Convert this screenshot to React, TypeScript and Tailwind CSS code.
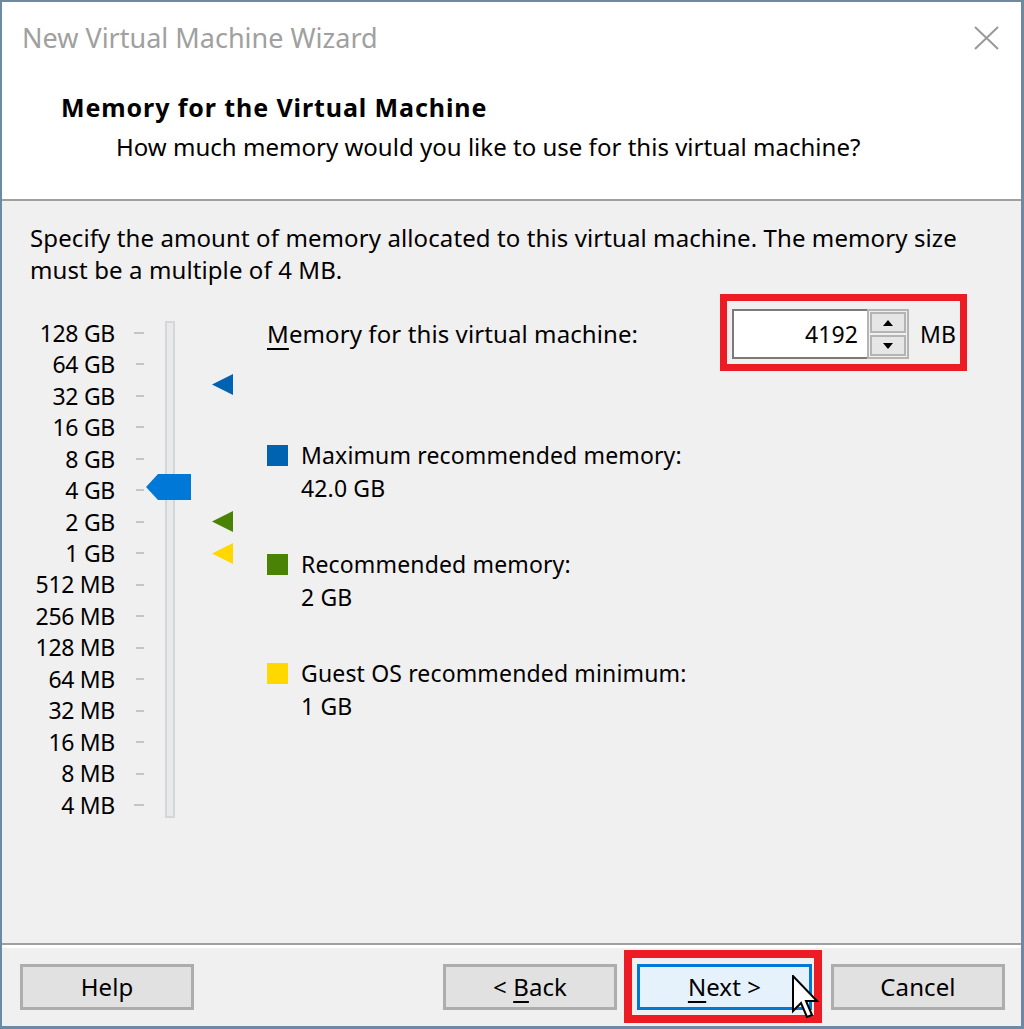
import React from "react";

const labels = [
  "128 GB", "64 GB", "32 GB", "16 GB", "8 GB", "4 GB", "2 GB", "1 GB",
  "512 MB", "256 MB", "128 MB", "64 MB", "32 MB", "16 MB", "8 MB", "4 MB",
];

function Marker({ color, top }: { color: string; top: number }) {
  return (
    <svg
      className="absolute left-[210px]"
      style={{ top }}
      width="21"
      height="21"
      viewBox="0 0 21 21"
    >
      <polygon points="0,10.5 21,0 21,21" fill={color} />
    </svg>
  );
}

function Legend({ color, title, value }: { color: string; title: string; value: string }) {
  return (
    <div className="flex items-start">
      <div className="mt-[6.5px] h-[21px] w-[21px] shrink-0" style={{ backgroundColor: color }} />
      <div className="ml-[13px] text-[23px] leading-[33px] tracking-[0.15px]">
        <div>{title}</div>
        <div>{value}</div>
      </div>
    </div>
  );
}

function Button({ children, primary }: { children: React.ReactNode; primary?: boolean }) {
  return (
    <div
      className={
        primary
          ? "flex h-[46px] w-[175px] items-center justify-center border-[3px] border-[#0078d7] bg-[#e5f1fb]"
          : "flex h-[46px] w-[174px] items-center justify-center border-[3px] border-[#adadad] bg-[#e1e1e1]"
      }
    >
      <span className="whitespace-pre">{children}</span>
    </div>
  );
}

export default function App() {
  return (
    <div className="h-[1029px] w-[1024px] bg-[#6d8aa5] pb-[3px] pl-[2px] pr-[3px] pt-[2px] font-['Noto_Sans',sans-serif] text-[24px] tracking-[0.1px] text-black">
      <div className="relative flex h-full flex-col bg-[#f0f0f0]">
        {/* Header */}
        <div className="h-[197px] shrink-0 bg-white">
          <div className="flex h-[52px] items-start justify-between pl-[20px] pr-[22px] pt-[20px]">
            <span className="text-[27px] leading-[32px] tracking-[0px] text-[#a0a0a0]">New Virtual Machine Wizard</span>
            <svg width="25" height="24" viewBox="0 0 25 24" className="mt-[4px]">
              <path d="M1 1 L24 23 M24 1 L1 23" stroke="#999999" strokeWidth="2" />
            </svg>
          </div>
          <div className="mt-[37px] pl-[59px] text-[25px] font-bold leading-[32px] tracking-[0.9px]">
            Memory for the Virtual Machine
          </div>
          <div className="mt-[8px] pl-[114px] leading-[32px] tracking-[0.02px]">
            How much memory would you like to use for this virtual machine?
          </div>
        </div>
        <div className="h-[2px] shrink-0 bg-[#a0a0a0]" />

        {/* Body */}
        <div className="h-[742px] shrink-0 pt-[21px]">
          <div className="pl-[28px] leading-[32px]">
            Specify the amount of memory allocated to this virtual machine. The memory size
            <br />
            must be a multiple of 4 MB.
          </div>

          <div className="mt-[23px] flex">
            {/* Slider area */}
            <div className="relative flex w-[238px] shrink-0">
              <div className="w-[113px] pt-[8.25px] text-right text-[23px] tracking-[-0.3px]">
                {labels.map((l) => (
                  <div key={l} className="flex h-[31.47px] items-center justify-end whitespace-nowrap">
                    {l}
                  </div>
                ))}
              </div>
              <div className="ml-[19px] w-[10px] pt-[8.25px]">
                {labels.map((l, i) => (
                  <div key={l} className="flex h-[31.47px] items-center justify-end">
                    <div
                      className={
                        i === 0 || i === labels.length - 1
                          ? "h-[2px] w-[10px] bg-[#c4c4c4]"
                          : "h-[2px] w-[8px] bg-[#c4c4c4]"
                      }
                    />
                  </div>
                ))}
              </div>
              <div className="ml-[21px] mt-[12px] h-[497px] w-[10px] border-2 border-[#d6d6d6] bg-[#e7e9ea]" />

              {/* thumb */}
              <svg className="absolute left-[144px] top-[165px]" width="45" height="26" viewBox="0 0 45 26">
                <polygon points="0,13 12,0 45,0 45,26 12,26" fill="#0078d7" />
              </svg>
              <Marker color="#0063b1" top={64.5} />
              <Marker color="#498205" top={202.3} />
              <Marker color="#ffd800" top={233.8} />
            </div>

            {/* Right column */}
            <div className="ml-[27px] flex flex-col">
              <div className="flex h-[50px] items-center">
                <div className="w-[465px]">
                  <span className="underline decoration-[2px] underline-offset-[5px]">M</span>emory for this virtual machine:
                </div>
                <div className="flex h-[50px] w-[135px] items-center justify-end border-y-2 border-l-2 border-[#7a7a7a] bg-white pr-[9px] text-[23px]">
                  4192
                </div>
                <div className="flex h-[50px] w-[42px] flex-col gap-[2px] border-2 border-[#b4b4b4] bg-[#f0f0f0] p-[1px]">
                  <div className="flex flex-1 items-center justify-center border-2 border-[#b4b4b4] bg-[#e6e6e6]">
                    <svg width="10" height="6" viewBox="0 0 10 6">
                      <polygon points="5,0 10,6 0,6" fill="#000" />
                    </svg>
                  </div>
                  <div className="flex flex-1 items-center justify-center border-2 border-[#b4b4b4] bg-[#e6e6e6]">
                    <svg width="10" height="6" viewBox="0 0 10 6">
                      <polygon points="0,0 10,0 5,6" fill="#000" />
                    </svg>
                  </div>
                </div>
                <div className="ml-[11px] text-[23px]">MB</div>
              </div>

              <div className="mt-[79.5px] flex flex-col gap-[43px]">
                <Legend color="#0063b1" title="Maximum recommended memory:" value="42.0 GB" />
                <Legend color="#498205" title="Recommended memory:" value="2 GB" />
                <Legend color="#ffd800" title="Guest OS recommended minimum:" value="1 GB" />
              </div>
            </div>
          </div>
        </div>

        <div className="h-[2px] shrink-0 bg-[#a0a0a0]" />
        <div className="h-[3px] shrink-0 bg-white" />

        {/* Buttons */}
        <div className="flex pl-[18px] pr-[16px] pt-[16px]">
          <Button>Help</Button>
          <div className="ml-auto">
            <Button>
              {"< "}
              <span className="underline decoration-[2px] underline-offset-[5px]">B</span>ack
            </Button>
          </div>
          <div className="ml-[20px]">
            <Button primary>
              <span className="underline decoration-[2px] underline-offset-[5px]">N</span>
              {"ext >"}
            </Button>
          </div>
          <div className="ml-[19px]">
            <Button>Cancel</Button>
          </div>
        </div>

        {/* Annotation boxes */}
        <div className="pointer-events-none absolute left-[718px] top-[292px] h-[77px] w-[247px] border-[7px] border-[#ed1c24]" />
        <div className="pointer-events-none absolute left-[622px] top-[948px] h-[73px] w-[198px] border-[8px] border-[#ed1c24]" />

        {/* Cursor */}
        <svg className="absolute left-[790px] top-[973px]" width="28" height="44" viewBox="0 0 28 44">
          <polygon
            points="1,1 1,36 9,28 15,42 20,40 14,26 25,26"
            fill="#ffffff"
            stroke="#000000"
            strokeWidth="2"
            strokeLinejoin="miter"
          />
        </svg>
      </div>
    </div>
  );
}
